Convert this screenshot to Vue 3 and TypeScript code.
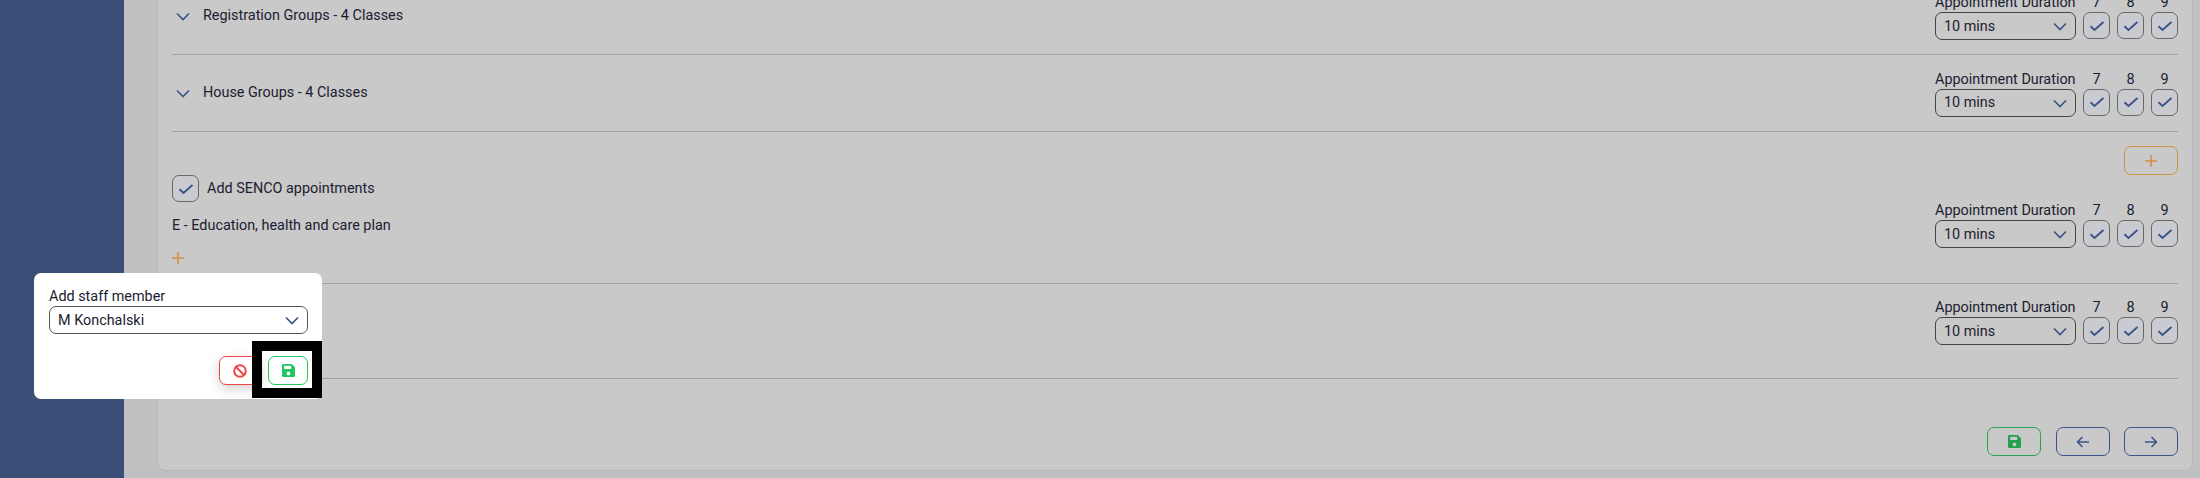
<script setup lang="ts">
interface DurationRow {
  id: string
  title?: string
}

const groupRows: DurationRow[] = [
  { id: 'registration', title: 'Registration Groups - 4 Classes' },
  { id: 'house', title: 'House Groups - 4 Classes' }
]

const years = [7, 8, 9]
</script>

<template>
  <div class="page">
    <aside class="sidebar"></aside>

    <main class="main">
      <section class="card">
        <!-- Group rows -->
        <div v-for="row in groupRows" :key="row.id" class="row group-row">
          <div class="group-title">
            <svg class="chevron" viewBox="0 0 16 16" width="16" height="16">
              <path d="M2 5.500l6 6 6-6" />
            </svg>
            <span>{{ row.title }}</span>
          </div>
          <div class="duration">
            <div class="duration-field">
              <label>Appointment Duration</label>
              <div class="select">
                <span>10 mins</span>
                <svg class="chevron" viewBox="0 0 16 16" width="16" height="16">
                  <path d="M2 5.500l6 6 6-6" />
                </svg>
              </div>
            </div>
            <div v-for="year in years" :key="year" class="year">
              <span>{{ year }}</span>
              <div class="check">
                <svg viewBox="0 0 16 16" width="16" height="16"><path d="M1.500 8.200l4 3.800 9-8" /></svg>
              </div>
            </div>
          </div>
        </div>

        <!-- SENCO appointments -->
        <div class="row senco-row">
          <div class="senco-left">
            <div class="senco-toggle">
              <div class="check">
                <svg viewBox="0 0 16 16" width="16" height="16"><path d="M1.500 8.200l4 3.800 9-8" /></svg>
              </div>
              <span>Add SENCO appointments</span>
            </div>
            <p class="senco-type">E - Education, health and care plan</p>
            <svg class="plus" viewBox="0 0 12 12" width="12" height="12"><path d="M6 0v12M0 6h12" /></svg>
          </div>
          <div class="senco-right">
            <button class="btn btn-orange">
              <svg class="plus" viewBox="0 0 12 12" width="12" height="12"><path d="M6 0v12M0 6h12" /></svg>
            </button>
            <div class="duration">
              <div class="duration-field">
                <label>Appointment Duration</label>
                <div class="select">
                  <span>10 mins</span>
                  <svg class="chevron" viewBox="0 0 16 16" width="16" height="16">
                    <path d="M2 5.500l6 6 6-6" />
                  </svg>
                </div>
              </div>
              <div v-for="year in years" :key="year" class="year">
                <span>{{ year }}</span>
                <div class="check">
                  <svg viewBox="0 0 16 16" width="16" height="16"><path d="M1.500 8.200l4 3.800 9-8" /></svg>
                </div>
              </div>
            </div>
          </div>
        </div>

        <div class="row last-row">
          <div class="duration">
            <div class="duration-field">
              <label>Appointment Duration</label>
              <div class="select">
                <span>10 mins</span>
                <svg class="chevron" viewBox="0 0 16 16" width="16" height="16">
                  <path d="M2 5.500l6 6 6-6" />
                </svg>
              </div>
            </div>
            <div v-for="year in years" :key="year" class="year">
              <span>{{ year }}</span>
              <div class="check">
                <svg viewBox="0 0 16 16" width="16" height="16"><path d="M1.500 8.200l4 3.800 9-8" /></svg>
              </div>
            </div>
          </div>
        </div>

        <!-- Footer actions -->
        <div class="actions">
          <button class="btn btn-green">
            <svg class="save" viewBox="0 0 12 12" width="13" height="13">
              <path fill-rule="evenodd" d="M1.200 0H9l3 3v7.800a1.200 1.200 0 0 1-1.200 1.200H1.200A1.200 1.200 0 0 1 0 10.800V1.200A1.200 1.200 0 0 1 1.200 0zM2 1.500v3h6.500v-3zM6 7a1.700 1.700 0 1 0 0 3.400A1.700 1.700 0 0 0 6 7z" />
            </svg>
          </button>
          <button class="btn btn-blue">
            <svg class="arrow" viewBox="0 0 14 14" width="14" height="14"><path d="M13 7H1.500M6.500 2 1.500 7l5 5" /></svg>
          </button>
          <button class="btn btn-blue">
            <svg class="arrow" viewBox="0 0 14 14" width="14" height="14"><path d="M1 7h11.500M7.500 2l5 5-5 5" /></svg>
          </button>
        </div>
      </section>
    </main>

    <!-- Tour popup -->
    <div class="popup">
      <label>Add staff member</label>
      <div class="select popup-select">
        <span>M Konchalski</span>
        <svg class="chevron" viewBox="0 0 16 16" width="16" height="16">
          <path d="M2 5.500l6 6 6-6" />
        </svg>
      </div>
      <div class="popup-actions">
        <button class="btn btn-red">
          <svg class="ban" viewBox="0 0 14 14" width="14" height="14">
            <circle cx="7" cy="7" r="5.800" />
            <path d="M3 3l8 8" />
          </svg>
        </button>
        <button class="btn btn-green-bright">
          <svg class="save" viewBox="0 0 12 12" width="13" height="13">
            <path fill-rule="evenodd" d="M1.200 0H9l3 3v7.800a1.200 1.200 0 0 1-1.200 1.200H1.200A1.200 1.200 0 0 1 0 10.800V1.200A1.200 1.200 0 0 1 1.200 0zM2 1.500v3h6.500v-3zM6 7a1.700 1.700 0 1 0 0 3.400A1.700 1.700 0 0 0 6 7z" />
          </svg>
        </button>
      </div>
    </div>
    <div class="spotlight"></div>
  </div>
</template>

<style>
html,
body {
  margin: 0;
  overflow: hidden;
}
</style>

<style scoped>
.page {
  position: relative;
  display: flex;
  width: 2200px;
  height: 478px;
  overflow: hidden;
  background: #bfc0c2;
  font-family: Roboto, "Liberation Sans", sans-serif;
  font-size: 14.400px;
  line-height: 19px;
  color: #1b2130;
}

.sidebar {
  flex: 0 0 124px;
  background: #3a4e78;
}

.main {
  flex: 1;
  padding-left: 33px;
  padding-right: 7px;
}

.card {
  box-sizing: border-box;
  height: 471px;
  padding: 0 14px 14px;
  background: #c9c9c9;
  border: solid #b6b7b9;
  border-width: 0 1px 1px 1px;
  border-radius: 0 0 8px 8px;
  display: flex;
  flex-direction: column;
}

.row {
  display: flex;
  justify-content: space-between;
  border-bottom: 1px solid #a3a3a3;
  box-sizing: border-box;
}

.group-row {
  align-items: center;
  padding: 14px 0 14px;
  height: 77px;
}

.group-row:first-child {
  height: 55px;
  padding-top: 0;
  align-items: flex-end;
}

.group-row:first-child .group-title {
  margin-bottom: 15px;
}

.group-title {
  display: flex;
  align-items: center;
  gap: 12px;
  padding-left: 3px;
  margin-bottom: 1px;
}

.chevron {
  fill: none;
  stroke: #3d5488;
  stroke-width: 1.700;
}

.duration {
  display: flex;
  gap: 7px;
  width: 243px;
}

.duration-field label,
.year span {
  display: block;
  height: 19px;
}

.duration-field {
  width: 141px;
}

.year {
  width: 27px;
  text-align: center;
}

.select {
  box-sizing: border-box;
  display: flex;
  align-items: center;
  justify-content: space-between;
  height: 28px;
  padding: 0 7px 0 8px;
  border: 1px solid #444;
  border-radius: 7px;
}

.check {
  box-sizing: border-box;
  width: 27px;
  height: 27px;
  display: flex;
  align-items: center;
  justify-content: center;
  border: 1px solid #686868;
  border-radius: 7px;
  background: #c9cbd0;
}

.check svg {
  fill: none;
  stroke: #3d5488;
  stroke-width: 1.900;
}

.senco-row {
  height: 152px;
  padding: 14px 0 0;
}

.senco-left {
  padding-top: 29px;
}

.senco-toggle {
  display: flex;
  align-items: center;
  gap: 8px;
}

.senco-type {
  margin: 14px 0 0;
}

.plus {
  fill: none;
  stroke: #d08f45;
  stroke-width: 1.600;
}

.senco-left > .plus {
  display: block;
  margin-top: 17px;
}

.senco-right {
  display: flex;
  flex-direction: column;
  align-items: flex-end;
}

.senco-right .duration {
  margin-top: 26px;
}

.last-row {
  height: 95px;
  padding-top: 14px;
  justify-content: flex-end;
}

.btn {
  box-sizing: border-box;
  width: 54px;
  height: 29px;
  padding: 0;
  display: flex;
  align-items: center;
  justify-content: center;
  background: transparent;
  border: 1px solid;
  border-radius: 7px;
}

.btn-orange {
  border-color: #d08f45;
}

.btn-green {
  border-color: #2aa352;
  margin-right: 1px;
}

.btn-green .save {
  fill: #22a04f;
}

.btn-blue {
  border-color: #3d5488;
}

.arrow {
  fill: none;
  stroke: #3d5488;
  stroke-width: 1.600;
}

.actions {
  margin-top: auto;
  display: flex;
  justify-content: flex-end;
  gap: 14px;
}

/* Tour popup and its highlight */
.popup {
  position: absolute;
  left: 34px;
  top: 273px;
  box-sizing: border-box;
  width: 288px;
  height: 126px;
  padding: 14px 14px 14px 15px;
  background: #fff;
  border-radius: 7px;
}

.popup label {
  display: block;
  height: 19px;
}

.popup-select {
  height: 28px;
  border-color: #555;
}

.popup-actions {
  display: flex;
  justify-content: flex-end;
  gap: 7px;
  margin-top: 22px;
}

.popup-actions .btn {
  width: 40px;
  background: #fff;
}

.popup-actions .btn-red {
  width: 42px;
}

.btn-red {
  border-color: #ef4444;
  box-shadow: 0 4px 12px rgba(0, 0, 0, 0.18);
}

.ban {
  fill: none;
  stroke: #ef4444;
  stroke-width: 2;
}

.btn-green-bright {
  border-color: #22c55e;
}

.btn-green-bright .save {
  fill: #22c55e;
}

.spotlight {
  position: absolute;
  left: 252px;
  top: 341px;
  box-sizing: border-box;
  width: 70px;
  height: 57px;
  border: 10px solid #000;
  pointer-events: none;
}
</style>
